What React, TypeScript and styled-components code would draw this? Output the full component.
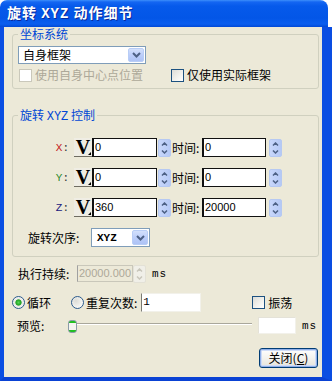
import styled, { createGlobalStyle } from 'styled-components';

////// STYLE >>>>>>>>>>>>>>>>>>>>>>>>>>>>>>>>>>>>>>>>>>>>>>>>>>>>>>>>>>>>>>>>>>>

const GlobalStyle = createGlobalStyle`
  html, body {
    margin: 0;
    background: #fff;
  }
  body {
    font-family: "Noto Sans CJK SC", "Noto Sans", sans-serif;
    font-size: 12px;
    color: #000;
  }
`;

const Window = styled.div`
  width: 332px;
  height: 381px;
  display: flex;
  flex-direction: column;
`;

const TitleBar = styled.div`
  height: 27px;
  flex: none;
  margin-right: 4px;
  border-radius: 7px 8px 0 0;
  background: linear-gradient(180deg, #3d8ffb 0px, #1466f2 2px, #065aeb 6px, #0356e7 18px, #0a5eef 24px, #0149d6 27px);
  display: flex;
  align-items: center;
  padding-left: 7px;
`;

const Title = styled.div`
  color: #fff;
  font-weight: bold;
  font-size: 14px;
  letter-spacing: 1px;
  text-shadow: 1px 1px 0 #0b2a9c;
  line-height: 16px;
  margin-top: -1px;
`;

const Mono = styled.span`
  font-family: "Liberation Mono", monospace;
`;

const Body = styled.div`
  flex: 1;
  background: #ece9d8;
  border-left: 4px solid #0a4ee2;
  border-right: 10px solid #0a4ee2;
  border-bottom: 4px solid #0a42d4;
  padding: 7px 0 0 8px;
  display: flex;
  flex-direction: column;
`;

const Group = styled.div<{ $pad: string; $mt: number }>`
  position: relative;
  width: 307px;
  box-sizing: border-box;
  border: 1px solid #d0d0bf;
  border-radius: 3px;
  padding: ${p => p.$pad};
  margin-top: ${p => p.$mt}px;
`;

const Caption = styled.div`
  position: absolute;
  top: -8px;
  left: 5px;
  padding: 0 2px;
  background: #ece9d8;
  color: #0046d5;
  line-height: 14px;
`;

const Combo = styled.div<{ $w: number; $h: number }>`
  width: ${p => p.$w}px;
  height: ${p => p.$h}px;
  box-sizing: border-box;
  border: 1px solid #7f9db9;
  background: #fff;
  display: flex;
  align-items: center;
  padding: 1px;
`;

const ComboText = styled.div`
  flex: 1;
  padding-left: 3px;
  line-height: 14px;
`;

const ComboMono = styled(ComboText)`
  font-family: "Liberation Mono", monospace;
  font-size: 11px;
  font-weight: bold;
  padding-left: 4px;
`;

const ComboButton = styled.div`
  width: 16px;
  height: 100%;
  box-sizing: border-box;
  border: 1px solid #b8cdf6;
  border-radius: 2px;
  background: linear-gradient(180deg, #d3e0fb 0%, #bccefa 50%, #aec3f5 100%);
  display: flex;
  align-items: center;
  justify-content: center;
`;

const CheckRow = styled.div`
  display: flex;
  align-items: center;
  height: 14px;
  margin-top: 4px;
`;

const CheckItem = styled.label<{ $w?: number; $ml?: number }>`
  display: flex;
  align-items: center;
  gap: 3px;
  width: ${p => (p.$w ? `${p.$w}px` : 'auto')};
  margin-left: ${p => p.$ml || 0}px;
  line-height: 14px;
  white-space: nowrap;
`;

const CheckBox = styled.span<{ $disabled?: boolean }>`
  width: 13px;
  height: 13px;
  box-sizing: border-box;
  flex: none;
  border: 1px solid ${p => (p.$disabled ? '#cac8bb' : '#1c5180')};
  background: ${p => (p.$disabled ? '#fff' : 'linear-gradient(135deg, #dcdcd7 0%, #f3f3ef 60%, #fff 100%)')};
`;

const CheckLabel = styled.span<{ $disabled?: boolean }>`
  color: ${p => (p.$disabled ? '#aca899' : '#000')};
`;

const AxisRow = styled.div`
  display: flex;
  align-items: center;
  height: 19px;
  margin-bottom: 11px;
`;

const AxisLabel = styled.div<{ $color: string }>`
  width: 61px;
  box-sizing: border-box;
  padding-right: 5px;
  text-align: right;
  font-family: "Liberation Mono", monospace;
  font-size: 11px;
  color: #333;
  b {
    font-weight: normal;
    color: ${p => p.$color};
  }
`;

const VButton = styled.div`
  position: relative;
  width: 18px;
  height: 19px;
  box-sizing: border-box;
  background: #efede4;
  border-bottom: 1px solid #6f6d62;
  display: flex;
  align-items: center;
  justify-content: center;
  font-family: "Liberation Serif", serif;
  font-weight: bold;
  font-size: 20px;
  line-height: 19px;
  &::after {
    content: '';
    position: absolute;
    right: 1px;
    bottom: 1px;
    border-left: 3px solid transparent;
    border-bottom: 3px solid #000;
  }
`;

const NumInput = styled.div<{ $w: number }>`
  width: ${p => p.$w}px;
  height: 19px;
  box-sizing: border-box;
  border: 1px solid #111;
  border-left-width: 2px;
  background: #fff;
  padding-left: 1px;
  font-family: "Liberation Sans", sans-serif;
  font-size: 11px;
  line-height: 17px;
`;

const Spin = styled.div<{ $ml: number; $disabled?: boolean }>`
  width: 13px;
  height: 18px;
  margin-left: ${p => p.$ml}px;
  box-sizing: border-box;
  border: 1px solid ${p => (p.$disabled ? '#e3e1d6' : '#b6c9f2')};
  border-radius: 2px;
  background: ${p => (p.$disabled ? '#f0efe8' : 'linear-gradient(90deg, #c8d7fb 0%, #b5c9f6 100%)')};
  display: flex;
  flex-direction: column;
  align-items: center;
  justify-content: space-around;
`;

const TimeLabel = styled.div`
  margin-left: 1px;
  width: 30px;
  white-space: nowrap;
`;

const OrderLabel = styled.div`
  margin-left: 15px;
  width: 63px;
  white-space: nowrap;
`;

const OrderRow = styled.div`
  display: flex;
  align-items: center;
  height: 19px;
`;

const Line = styled.div<{ $mt: number; $h: number }>`
  display: flex;
  align-items: center;
  height: ${p => p.$h}px;
  margin-top: ${p => p.$mt}px;
  white-space: nowrap;
`;

const RowLabel = styled.div<{ $ml: number; $w: number }>`
  margin-left: ${p => p.$ml}px;
  width: ${p => p.$w}px;
  color: #000;
`;

const DisabledInput = styled.div`
  width: 56px;
  height: 17px;
  box-sizing: border-box;
  border: 1px solid #c9c7ba;
  border-left-color: #a0a0a0;
  background: #ece9d8;
  color: #aca899;
  overflow: hidden;
  white-space: nowrap;
  font-family: "Liberation Sans", sans-serif;
  font-size: 11px;
  line-height: 15px;
  padding-left: 1px;
`;

const Unit = styled.div<{ $ml: number }>`
  margin-left: ${p => p.$ml}px;
  font-family: "Liberation Mono", monospace;
  font-size: 11px;
  letter-spacing: 1px;
`;

const RadioItem = styled.label<{ $w?: number }>`
  display: flex;
  align-items: center;
  gap: 2px;
  width: ${p => (p.$w ? `${p.$w}px` : 'auto')};
`;

const Radio = styled.span<{ $checked?: boolean }>`
  width: 13px;
  height: 13px;
  box-sizing: border-box;
  border-radius: 50%;
  border: 1px solid #2b5a8c;
  background: ${p =>
    p.$checked
      ? 'radial-gradient(circle, #55d655 0%, #21a121 35%, #e9e9e4 45%, #fff 100%)'
      : 'radial-gradient(circle at 35% 35%, #dcdcd7 0%, #f3f3ef 60%, #fff 100%)'};
`;

const PlainInput = styled.div<{ $w: number; $h: number; $ml: number; $edge?: boolean }>`
  width: ${p => p.$w}px;
  height: ${p => p.$h}px;
  margin-left: ${p => p.$ml}px;
  box-sizing: border-box;
  background: #fff;
  border: 1px solid #f2f1ea;
  border-left-color: ${p => (p.$edge ? '#7b7b74' : '#e4e2d8')};
  border-top-color: ${p => (p.$edge ? '#f2f1ea' : '#e4e2d8')};
  font-family: "Liberation Mono", monospace;
  font-size: 11px;
  line-height: 17px;
  padding-left: 1px;
`;

const Slider = styled.div`
  position: relative;
  width: 184px;
  height: 17px;
`;

const Track = styled.div`
  position: absolute;
  left: 2px;
  right: 0;
  top: 6px;
  height: 1px;
  background: #a9a79b;
  border-bottom: 1px solid #fff;
`;

const Thumb = styled.div`
  position: absolute;
  left: 0;
  top: 3px;
  width: 9px;
  height: 13px;
  box-sizing: border-box;
  border: 1px solid #8b9ba8;
  border-radius: 3px;
  background: linear-gradient(180deg, #21c021 0px, #21c021 2px, #f4f4f0 2px, #f4f4f0 9px, #21c021 9px);
`;

const ButtonRow = styled.div`
  display: flex;
  justify-content: flex-end;
  margin-top: 14px;
  padding-right: 0;
  width: 306px;
`;

const Button = styled.button`
  width: 59px;
  height: 20px;
  box-sizing: border-box;
  border: 1px solid #003c74;
  border-radius: 3px;
  background: linear-gradient(180deg, #fff 0%, #f3f2ee 50%, #e5e3da 100%);
  box-shadow: inset 0 0 0 1px #8faee8, inset 0 0 0 2px #cfdcf7;
  font-family: "Noto Sans CJK SC", sans-serif;
  font-size: 12px;
  padding: 0;
  line-height: 16px;
  color: #000;
  u {
    text-decoration: underline;
  }
`;

////// ICONS >>>>>>>>>>>>>>>>>>>>>>>>>>>>>>>>>>>>>>>>>>>>>>>>>>>>>>>>>>>>>>>>>>>

const ChevronDown = () => (
  <svg width="9" height="6" viewBox="0 0 9 6">
    <path d="M1 1 L4.5 4.5 L8 1" fill="none" stroke="#4d6185" strokeWidth="2" />
  </svg>
)

const SpinArrow = ({ up, color }: { up?: boolean; color: string }) => (
  <svg width="7" height="4" viewBox="0 0 7 4">
    <path d={up ? 'M1 3.5 L3.5 1 L6 3.5' : 'M1 0.5 L3.5 3 L6 0.5'} fill="none" stroke={color} strokeWidth="1.5" />
  </svg>
)

const SpinButton = ({ ml, disabled }: { ml: number; disabled?: boolean }) => (
  <Spin $ml={ml} $disabled={disabled}>
    <SpinArrow up color={disabled ? '#c8c6bb' : '#4d6185'} />
    <SpinArrow color={disabled ? '#c8c6bb' : '#4d6185'} />
  </Spin>
)

////// COMPONENT >>>>>>>>>>>>>>>>>>>>>>>>>>>>>>>>>>>>>>>>>>>>>>>>>>>>>>>>>>>>>>>

const axes = [
  { name: 'X', color: '#c41a1a', value: '0', time: '0' },
  { name: 'Y', color: '#2d8a2d', value: '0', time: '0' },
  { name: 'Z', color: '#1a1a80', value: '360', time: '20000' },
]

const App = () => {
  return (
    <Window>
      <GlobalStyle />
      <TitleBar>
        <Title>旋转 <Mono>XYZ</Mono> 动作细节</Title>
      </TitleBar>
      <Body>
        <Group $pad="11px 5px 6px 5px" $mt={0}>
          <Caption>坐标系统</Caption>
          <Combo $w={128} $h={18}>
            <ComboText>自身框架</ComboText>
            <ComboButton><ChevronDown /></ComboButton>
          </Combo>
          <CheckRow>
            <CheckItem $w={152} $ml={1}>
              <CheckBox $disabled />
              <CheckLabel $disabled>使用自身中心点位置</CheckLabel>
            </CheckItem>
            <CheckItem>
              <CheckBox />
              <CheckLabel>仅使用实际框架</CheckLabel>
            </CheckItem>
          </CheckRow>
        </Group>

        <Group $pad="22px 0 9px 0" $mt={26}>
          <Caption>旋转 <Mono>XYZ</Mono> 控制</Caption>
          {axes.map(a => (
            <AxisRow key={a.name}>
              <AxisLabel $color={a.color}><b>{a.name}</b>:</AxisLabel>
              <VButton>V</VButton>
              <NumInput $w={65}>{a.value}</NumInput>
              <SpinButton ml={1} />
              <TimeLabel>时间:</TimeLabel>
              <NumInput $w={64}>{a.time}</NumInput>
              <SpinButton ml={3} />
            </AxisRow>
          ))}
          <OrderRow>
            <OrderLabel>旋转次序:</OrderLabel>
            <Combo $w={59} $h={19}>
              <ComboMono>XYZ</ComboMono>
              <ComboButton><ChevronDown /></ComboButton>
            </Combo>
          </OrderRow>
        </Group>

        <Line $mt={8} $h={17}>
          <RowLabel $ml={6} $w={59}>执行持续:</RowLabel>
          <DisabledInput>20000.000</DisabledInput>
          <SpinButton ml={0} disabled />
          <Unit $ml={6}>ms</Unit>
        </Line>

        <Line $mt={11} $h={19}>
          <RadioItem $w={59}>
            <Radio $checked />
            <span>循环</span>
          </RadioItem>
          <RadioItem>
            <Radio />
            <span>重复次数:</span>
          </RadioItem>
          <PlainInput $w={60} $h={19} $ml={4} $edge>1</PlainInput>
          <CheckItem $ml={51}>
            <CheckBox />
            <CheckLabel>振荡</CheckLabel>
          </CheckItem>
        </Line>

        <Line $mt={5} $h={17}>
          <RowLabel $ml={5} $w={51}>预览:</RowLabel>
          <Slider>
            <Track />
            <Thumb />
          </Slider>
          <PlainInput $w={38} $h={17} $ml={6} />
          <Unit $ml={6}>ms</Unit>
        </Line>

        <ButtonRow>
          <Button>关闭(<u>C</u>)</Button>
        </ButtonRow>
      </Body>
    </Window>
  )
}

export default App;
